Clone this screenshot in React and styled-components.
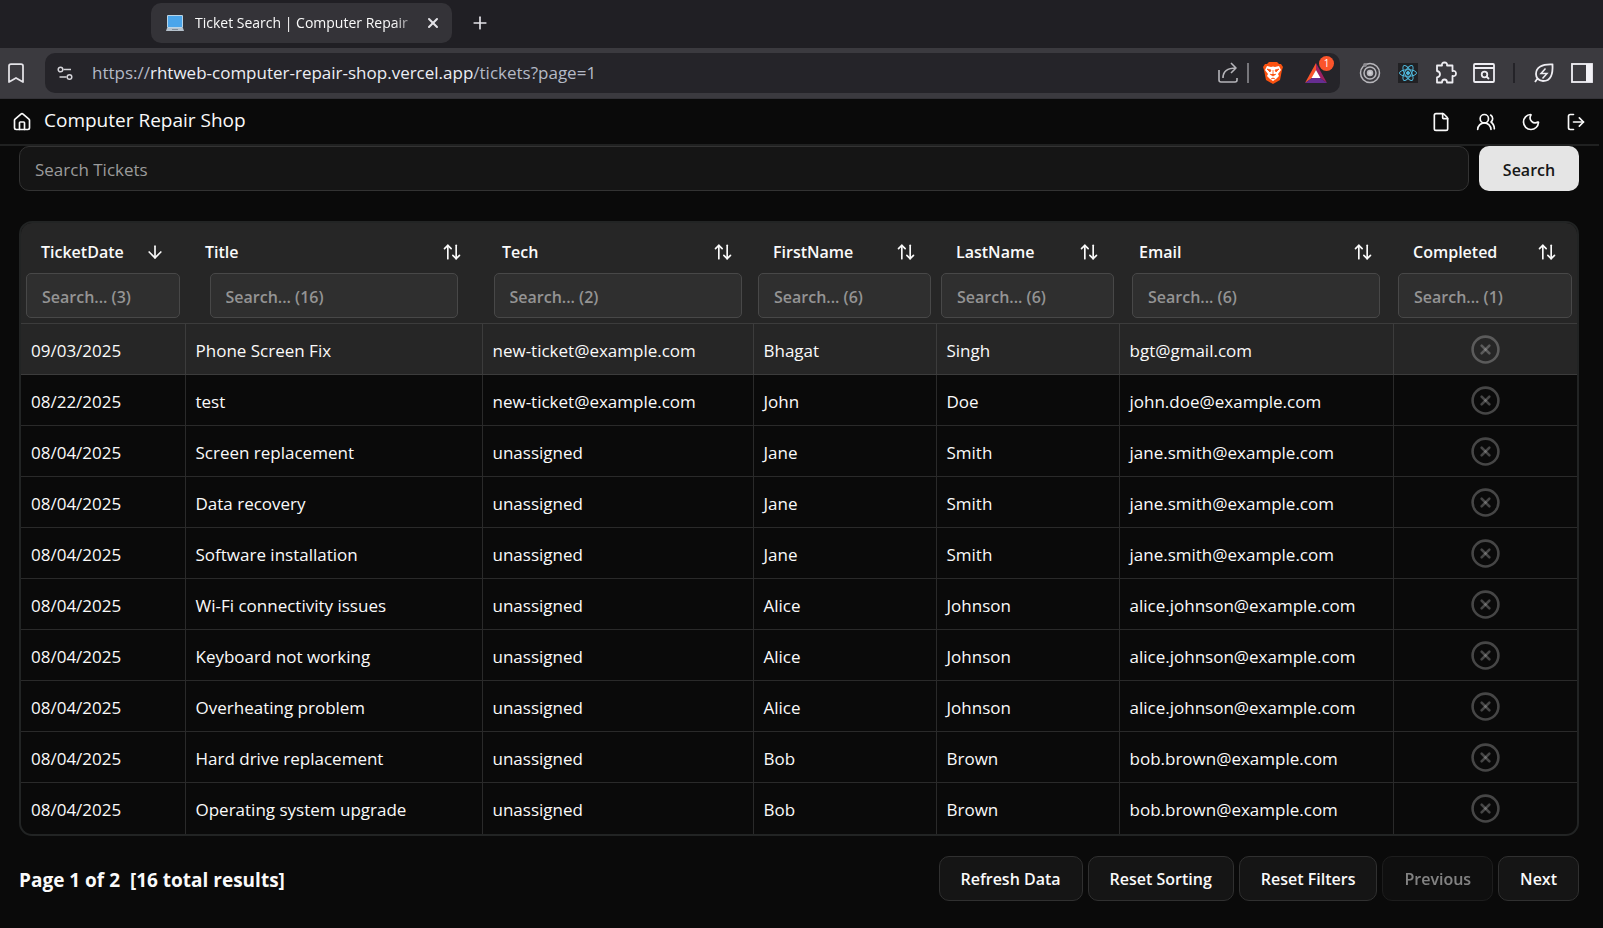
import React from 'react'
import styled, { createGlobalStyle } from 'styled-components'
import { House, File, UsersRound, Moon, LogOut, ArrowDown, ArrowUpDown, CircleX, Bookmark, X, Plus } from 'lucide-react'

const GlobalStyle = createGlobalStyle`
  * {
    box-sizing: border-box;
  }
  body {
    margin: 0;
    background: #0a0a0a;
    color: #fafafa;
    font-family: 'Open Sans', 'Noto Sans', sans-serif;
    font-size: 17px;
    line-height: 24px;
  }
  button, input {
    font: inherit;
    color: inherit;
  }
  button {
    cursor: pointer;
  }
`

const TabStrip = styled.div`
  display: flex;
  align-items: flex-start;
  gap: 8px;
  height: 48px;
  padding: 3px 0 0 151px;
  background: #201f24;
`
const Tab = styled.div`
  display: flex;
  align-items: center;
  width: 301px;
  height: 40px;
  padding: 0 7px 0 15px;
  border-radius: 10px;
  background: #343338;
  font-size: 14px;
`
const TabTitle = styled.span`
  flex: 1;
  margin-left: 11px;
  white-space: nowrap;
  mask-image: linear-gradient(to right, #000 88%, transparent);
`
const ChromeButton = styled.button`
  display: flex;
  align-items: center;
  justify-content: center;
  flex: none;
  width: ${({ $size = 24 }) => $size}px;
  height: ${({ $size = 24 }) => $size}px;
  padding: 0;
  border: 0;
  background: none;
  color: #e4e3e8;
`
const Toolbar = styled.div`
  display: flex;
  align-items: center;
  height: 51px;
  padding: 0 9px 0 4px;
  border-bottom: 1px solid #333237;
  background: #3b3a3f;
`
const AddressBar = styled.div`
  display: flex;
  flex: 1;
  align-items: center;
  height: 40px;
  margin-left: 17px;
  padding: 0 10px;
  border-radius: 10px;
  background: #252429;
`
const Address = styled.div`
  flex: 1;
  margin-left: 17px;
  color: #b4b9c6;
  span {
    color: #eceef4;
  }
`
const Separator = styled.span`
  width: 2px;
  height: 20px;
  margin: 0 ${({ $right }) => $right}px 0 ${({ $left }) => $left}px;
  background: ${({ $color }) => $color};
`
const Rewards = styled(ChromeButton)`
  position: relative;
  margin-left: 17px;
`
const Badge = styled.span`
  position: absolute;
  top: -3px;
  right: -4px;
  width: 15px;
  height: 15px;
  border-radius: 50%;
  background: #fb542b;
  color: #fff;
  font-size: 10px;
  line-height: 15px;
`
const ToolGroup = styled.div`
  display: flex;
  gap: 14px;
`
const Extensions = styled(ToolGroup)`
  margin-left: 18px;
`

const Header = styled.header`
  display: flex;
  align-items: center;
  justify-content: space-between;
  height: 47px;
  margin-right: 4px;
  padding: 0 13px 0 12px;
  border-bottom: 2px solid #202121;
`
const Brand = styled.a`
  display: flex;
  align-items: center;
  gap: 12px;
  color: inherit;
  text-decoration: none;
  h1 {
    margin: 0 0 4px;
    font-size: 19px;
    font-weight: 400;
  }
`
const Nav = styled.nav`
  display: flex;
  gap: 25px;
`
const IconLink = styled.a`
  display: flex;
  color: inherit;
`
const IconButton = styled.button`
  display: flex;
  padding: 0;
  border: 0;
  background: none;
`
const Main = styled.main`
  padding: 0 24px 0 19px;
`
const SearchForm = styled.form`
  display: flex;
  gap: 10px;
`
const SearchInput = styled.input`
  flex: 1;
  min-width: 0;
  height: 45px;
  padding: 2px 15px 0;
  border: 1px solid #333;
  border-radius: 10px;
  background: #151515;
  &::placeholder {
    color: #9b9b9b;
  }
`
const SearchButton = styled.button`
  width: 100px;
  height: 45px;
  padding: 2px 0 0;
  border: 0;
  border-radius: 10px;
  background: #e5e5e5;
  color: #171717;
  font-size: 16px;
  font-weight: 600;
`

const TableFrame = styled.div`
  margin-top: 30px;
  overflow: hidden;
  border: 2px solid #222424;
  border-radius: 13px;
`
const Table = styled.table`
  width: 100%;
  table-layout: fixed;
  border-collapse: collapse;
`
const HeadCell = styled.th`
  height: 100px;
  padding: 6px 5px 5px;
  background: #262626;
  vertical-align: top;
  font-weight: 600;
`
const SortButton = styled.button`
  display: flex;
  align-items: center;
  justify-content: space-between;
  width: 100%;
  height: 44px;
  padding: 2px 15px 0;
  border: 0;
  background: none;
  font-size: 16px;
`
const FilterInput = styled.input`
  display: block;
  width: 100%;
  max-width: 248px;
  height: 45px;
  margin: 0 auto;
  padding: 2px 15px 0;
  border: 1px solid #484848;
  border-radius: 5px;
  background: #2f2f2f;
  font-size: 16px;
  font-weight: 600;
  &::placeholder {
    color: #949494;
  }
`
const Row = styled.tr`
  border-top: 1px solid #2a2a2a;
  &:first-child, &:nth-child(2) {
    border-color: #3c3c3c;
  }
  &:first-child {
    background: #262626;
  }
  &:first-child td {
    border-left-color: #3c3c3c;
  }
`
const Cell = styled.td`
  height: 51px;
  padding: 4px 10px 0;
  white-space: nowrap;
  & + & {
    border-left: 1px solid #2a2a2a;
  }
  svg {
    display: block;
    margin: 0 auto 3px;
    color: rgba(250, 250, 250, 0.25);
  }
`
const Footer = styled.footer`
  display: flex;
  align-items: center;
  justify-content: space-between;
  margin-top: 20px;
`
const Summary = styled.p`
  margin: 0;
  padding-top: 4px;
  font-size: 19px;
  font-weight: 700;
  white-space: pre;
`
const Actions = styled.div`
  display: flex;
  gap: 5px;
`
const ActionButton = styled.button`
  height: 45px;
  padding: 2px 21px 0;
  border: 1px solid #303030;
  border-radius: 10px;
  background: #151515;
  font-size: 16px;
  font-weight: 600;
  &:disabled {
    opacity: 0.5;
  }
`

const LaptopIcon = () => (
  <svg width="18" height="16" viewBox="0 0 18 16">
    <rect x="1" y="0" width="16" height="13" rx="1" fill="#b9d4e6" />
    <rect x="2" y="1" width="14" height="11" fill="#4aa5ea" />
    <path d="M1 13h16l1 3H0z" fill="#b5c1cc" />
    <path d="M6 14.5h6" stroke="#7d8c99" />
  </svg>
)
const TuneIcon = () => (
  <svg width="20" height="20" viewBox="0 0 20 20" fill="none" stroke="#d4d3d8" strokeWidth="1.5">
    <circle cx="5.500" cy="6.500" r="2.300" />
    <path d="M8.500 6.500H16M4.500 14h7" />
    <circle cx="14.500" cy="14" r="2.300" />
  </svg>
)
const ShareIcon = () => (
  <svg width="22" height="22" viewBox="0 0 22 22" fill="none" stroke="#b5b4b9" strokeWidth="1.6" strokeLinejoin="round">
    <path d="M2 8v10q0 2 2 2h14q2 0 2-2v-2" />
    <path d="M6 16c0-6 4-10 13-10M14 1l5 5-5 5" />
  </svg>
)
const BraveIcon = () => (
  <svg width="22" height="24" viewBox="0 0 22 24">
    <path d="M7 1h8l2 2h2l2 3-1 3-2 10-7 4-7-4L2 9 1 6l2-3h2z" fill="#fb5210" />
    <path d="M5 5l4 1 2-.5 2 .5 4-1 2 4-3 4 1 2-3 3-3 2-3-2-3-3 1-2-3-4z" fill="#fff" />
    <path d="M5 8l4 1-1 2zM17 8l-4 1 1 2zM11 9v5M8 13l3 2 3-2M9 18l2-1 2 1" fill="#fb5210" stroke="#fb5210" strokeWidth="0.8" />
  </svg>
)
const BatIcon = () => (
  <svg width="24" height="22" viewBox="0 0 24 22">
    <path d="M12 1L1 21l7-5 4-8z" fill="#fb542b" />
    <path d="M12 1l11 20-7-5-4-8z" fill="#9e1f63" />
    <path d="M1 21h22l-7-5H8z" fill="#662d91" />
    <path d="M12 8l4.500 8h-9z" fill="#fff" />
  </svg>
)
const TargetIcon = () => (
  <svg width="24" height="24" viewBox="0 0 24 24" fill="none" stroke="#b7b6bb" strokeWidth="1.500">
    <circle cx="12" cy="12" r="9.500" />
    <circle cx="12" cy="12" r="6" />
    <circle cx="12" cy="12" r="2.500" fill="#d0cfd4" />
    <circle cx="7" cy="4" r="1.200" fill="#8c8b90" stroke="#8c8b90" />
  </svg>
)
const ReactIcon = () => (
  <svg width="20" height="20" viewBox="0 0 20 20" fill="none" stroke="#4fb8dc">
    <rect width="20" height="20" fill="#212124" stroke="none" />
    <ellipse cx="10" cy="10" rx="8.500" ry="3.300" />
    <ellipse cx="10" cy="10" rx="8.500" ry="3.300" transform="rotate(60 10 10)" />
    <ellipse cx="10" cy="10" rx="8.500" ry="3.300" transform="rotate(120 10 10)" />
    <circle cx="10" cy="10" r="1.500" fill="#4fb8dc" />
  </svg>
)
const PuzzleIcon = () => (
  <svg width="24" height="24" viewBox="0 0 24 24" fill="none" stroke="#eeedf2" strokeWidth="1.800" strokeLinejoin="round">
    <path d="M3 4.500h5q-.5-3 2.500-3t2.500 3h5.500v5.500q3.500-.5 3.500 2.500t-3.500 2.500V21.500H13q0-3-2.500-3T8 21.500H3v-5q3-.5 3-3.200T3 10z" />
  </svg>
)
const PageSearchIcon = () => (
  <svg width="24" height="24" viewBox="0 0 24 24" fill="none" stroke="#eeedf2" strokeWidth="1.800">
    <rect x="2" y="3" width="20" height="18" rx="1" />
    <path d="M2 7h20M14.500 15.500l2.500 2.500" />
    <circle cx="12.500" cy="13.500" r="2.800" />
  </svg>
)
const LeafIcon = () => (
  <svg width="24" height="24" viewBox="0 0 24 24" fill="none" stroke="#eeedf2" strokeWidth="1.800">
    <path d="M20.500 3.500C10 3 4 6 4 13c0 2 .5 3 1.500 4.500C7 19 9 20 11 20c8 0 10-7 9.500-16.500zM5.500 17.500L3 21" />
    <path d="M13.500 7.500L9 12.500h6l-4.500 5" strokeWidth="1.500" />
  </svg>
)
const SidebarIcon = () => (
  <svg width="22" height="20" viewBox="0 0 22 20">
    <rect x="1" y="1" width="20" height="18" fill="none" stroke="#f3f2f7" strokeWidth="1.800" />
    <path d="M15 1h6v18h-6z" fill="#f3f2f7" />
  </svg>
)

const columns = [
  { name: 'TicketDate', count: 3, width: 164, sorted: true },
  { name: 'Title', count: 16, width: 297 },
  { name: 'Tech', count: 2, width: 271 },
  { name: 'FirstName', count: 6, width: 183 },
  { name: 'LastName', count: 6, width: 183 },
  { name: 'Email', count: 6, width: 274 },
  { name: 'Completed', count: 1, width: 184 },
]
const totalWidth = columns.reduce((sum, c) => sum + c.width, 0)

const tickets = [
  ['09/03/2025', 'Phone Screen Fix', 'new-ticket@example.com', 'Bhagat', 'Singh', 'bgt@gmail.com'],
  ['08/22/2025', 'test', 'new-ticket@example.com', 'John', 'Doe', 'john.doe@example.com'],
  ['08/04/2025', 'Screen replacement', 'unassigned', 'Jane', 'Smith', 'jane.smith@example.com'],
  ['08/04/2025', 'Data recovery', 'unassigned', 'Jane', 'Smith', 'jane.smith@example.com'],
  ['08/04/2025', 'Software installation', 'unassigned', 'Jane', 'Smith', 'jane.smith@example.com'],
  ['08/04/2025', 'Wi-Fi connectivity issues', 'unassigned', 'Alice', 'Johnson', 'alice.johnson@example.com'],
  ['08/04/2025', 'Keyboard not working', 'unassigned', 'Alice', 'Johnson', 'alice.johnson@example.com'],
  ['08/04/2025', 'Overheating problem', 'unassigned', 'Alice', 'Johnson', 'alice.johnson@example.com'],
  ['08/04/2025', 'Hard drive replacement', 'unassigned', 'Bob', 'Brown', 'bob.brown@example.com'],
  ['08/04/2025', 'Operating system upgrade', 'unassigned', 'Bob', 'Brown', 'bob.brown@example.com'],
]

const Browser = () => (
  <>
    <TabStrip>
      <Tab>
        <LaptopIcon />
        <TabTitle>Ticket Search | Computer Repair</TabTitle>
        <ChromeButton aria-label="Close tab"><X size={16} strokeWidth={3} /></ChromeButton>
      </Tab>
      <ChromeButton $size={40} aria-label="New tab"><Plus size={20} /></ChromeButton>
    </TabStrip>
    <Toolbar>
      <ChromeButton aria-label="Bookmark"><Bookmark size={24} strokeWidth={1.75} /></ChromeButton>
      <AddressBar>
        <TuneIcon />
        <Address>https://<span>rhtweb-computer-repair-shop.vercel.app</span>/tickets?page=1</Address>
        <ChromeButton aria-label="Share"><ShareIcon /></ChromeButton>
        <Separator $left={7} $right={12} $color="#77767b" />
        <ChromeButton aria-label="Shields"><BraveIcon /></ChromeButton>
        <Rewards $size={28} aria-label="Rewards">
          <BatIcon />
          <Badge>1</Badge>
        </Rewards>
      </AddressBar>
      <Extensions>
        <ChromeButton aria-label="Recorder"><TargetIcon /></ChromeButton>
        <ChromeButton aria-label="React tools"><ReactIcon /></ChromeButton>
        <ChromeButton aria-label="Extensions"><PuzzleIcon /></ChromeButton>
        <ChromeButton aria-label="Page search"><PageSearchIcon /></ChromeButton>
      </Extensions>
      <Separator $left={17} $right={17} $color="#242328" />
      <ToolGroup>
        <ChromeButton aria-label="Energy saver"><LeafIcon /></ChromeButton>
        <ChromeButton aria-label="Side panel"><SidebarIcon /></ChromeButton>
      </ToolGroup>
    </Toolbar>
  </>
)

const TicketTable = () => (
  <TableFrame>
    <Table>
      <colgroup>
        {columns.map((c) => (
          <col key={c.name} style={{ width: `${(c.width / totalWidth) * 100}%` }} />
        ))}
      </colgroup>
      <thead>
        <tr>
          {columns.map((c) => (
            <HeadCell key={c.name}>
              <SortButton>
                {c.name}
                {c.sorted ? <ArrowDown size={20} /> : <ArrowUpDown size={20} />}
              </SortButton>
              <FilterInput aria-label={`Filter ${c.name}`} placeholder={`Search... (${c.count})`} />
            </HeadCell>
          ))}
        </tr>
      </thead>
      <tbody>
        {tickets.map((ticket, i) => (
          <Row key={i}>
            {ticket.map((value, j) => (
              <Cell key={j}>{value}</Cell>
            ))}
            <Cell><CircleX size={31} aria-label="Not completed" /></Cell>
          </Row>
        ))}
      </tbody>
    </Table>
  </TableFrame>
)

export default function App() {
  return (
    <>
      <GlobalStyle />
      <Browser />
      <Header>
        <Brand href="#home">
          <House size={20} />
          <h1>Computer Repair Shop</h1>
        </Brand>
        <Nav>
          <IconLink href="#tickets" aria-label="Tickets"><File size={20} /></IconLink>
          <IconLink href="#customers" aria-label="Customers"><UsersRound size={20} /></IconLink>
          <IconButton aria-label="Theme"><Moon size={20} /></IconButton>
          <IconLink href="#logout" aria-label="Logout"><LogOut size={20} /></IconLink>
        </Nav>
      </Header>
      <Main>
        <SearchForm onSubmit={(e) => e.preventDefault()}>
          <SearchInput aria-label="Search Tickets" placeholder="Search Tickets" />
          <SearchButton>Search</SearchButton>
        </SearchForm>
        <TicketTable />
        <Footer>
          <Summary>{'Page 1 of 2  [16 total results]'}</Summary>
          <Actions>
            <ActionButton>Refresh Data</ActionButton>
            <ActionButton>Reset Sorting</ActionButton>
            <ActionButton>Reset Filters</ActionButton>
            <ActionButton disabled>Previous</ActionButton>
            <ActionButton>Next</ActionButton>
          </Actions>
        </Footer>
      </Main>
    </>
  )
}
